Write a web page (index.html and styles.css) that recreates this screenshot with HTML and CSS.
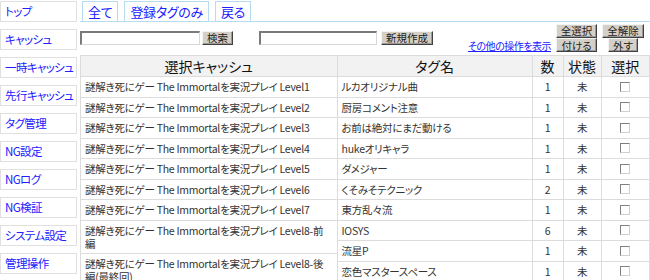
FILE: index.html
```html
<html>
  <head>
    <meta charset="utf-8" />
    <link rel="stylesheet" href="styles.css">
  </head>
  <body>
    <div class="layout">
      <div class="sidenav">
        <a href="#">トップ</a>
        <a href="#">キャッシュ</a>
        <a href="#">一時キャッシュ</a>
        <a href="#">先行キャッシュ</a>
        <a href="#">タグ管理</a>
        <a href="#">NG設定</a>
        <a href="#">NGログ</a>
        <a href="#">NG検証</a>
        <a href="#">システム設定</a>
        <a href="#">管理操作</a>
      </div>

      <div class="main">
        <div class="tabs">
          <a href="#">全て</a>
          <a href="#">登録タグのみ</a>
          <a href="#">戻る</a>
        </div>

        <div class="tools">
          <div class="search">
            <input type="text" class="text" id="searchInput" />
            <button class="btn btn-search">検索</button>
            <input type="text" class="text text-new" id="newTagInput" />
            <button class="btn btn-new">新規作成</button>
          </div>
          <div class="bulk">
            <span></span>
            <button class="btn">全選択</button>
            <button class="btn">全解除</button>
            <a href="#" class="more">その他の操作を表示</a>
            <button class="btn">付ける</button>
            <button class="btn">外す</button>
          </div>
        </div>

        <div class="tables">
          <table class="cache-table">
            <tr><th>選択キャッシュ</th></tr>
            <tr><td>謎解き死にゲー The Immortalを実況プレイ Level1</td></tr>
            <tr><td>謎解き死にゲー The Immortalを実況プレイ Level2</td></tr>
            <tr><td>謎解き死にゲー The Immortalを実況プレイ Level3</td></tr>
            <tr><td>謎解き死にゲー The Immortalを実況プレイ Level4</td></tr>
            <tr><td>謎解き死にゲー The Immortalを実況プレイ Level5</td></tr>
            <tr><td>謎解き死にゲー The Immortalを実況プレイ Level6</td></tr>
            <tr><td>謎解き死にゲー The Immortalを実況プレイ Level7</td></tr>
            <tr><td>謎解き死にゲー The Immortalを実況プレイ Level8-前編</td></tr>
            <tr><td>謎解き死にゲー The Immortalを実況プレイ Level8-後編(最終回)</td></tr>
          </table>

          <table class="tag-table">
            <tr>
              <th class="col-name">タグ名</th>
              <th class="col-num">数</th>
              <th class="col-state">状態</th>
              <th class="col-check">選択</th>
            </tr>
            <tr><td>ルカオリジナル曲</td><td class="c">1</td><td class="c">未</td><td class="c"><input type="checkbox" class="check" /></td></tr>
            <tr><td>厨房コメント注意</td><td class="c">1</td><td class="c">未</td><td class="c"><input type="checkbox" class="check" /></td></tr>
            <tr><td>お前は絶対にまだ動ける</td><td class="c">1</td><td class="c">未</td><td class="c"><input type="checkbox" class="check" /></td></tr>
            <tr><td>hukeオリキャラ</td><td class="c">1</td><td class="c">未</td><td class="c"><input type="checkbox" class="check" /></td></tr>
            <tr><td>ダメジャー</td><td class="c">1</td><td class="c">未</td><td class="c"><input type="checkbox" class="check" /></td></tr>
            <tr><td>くそみそテクニック</td><td class="c">2</td><td class="c">未</td><td class="c"><input type="checkbox" class="check" /></td></tr>
            <tr><td>東方乱々流</td><td class="c">1</td><td class="c">未</td><td class="c"><input type="checkbox" class="check" /></td></tr>
            <tr><td>IOSYS</td><td class="c">6</td><td class="c">未</td><td class="c"><input type="checkbox" class="check" /></td></tr>
            <tr><td>流星P</td><td class="c">1</td><td class="c">未</td><td class="c"><input type="checkbox" class="check" /></td></tr>
            <tr><td>恋色マスタースペース</td><td class="c">1</td><td class="c">未</td><td class="c"><input type="checkbox" class="check" /></td></tr>
          </table>
        </div>
      </div>
    </div>
  </body>
</html>
```

FILE: styles.css
```css
body {
  margin: 0;
  font-family: "Noto Sans CJK JP", "Liberation Sans", sans-serif;
  font-feature-settings: "palt";
  font-size: 12px;
  color: #333;
  background: #fff;
  overflow: hidden;
}

.layout {
  display: flex;
  align-items: flex-start;
}

/* left menu */
.sidenav {
  width: 77px;
  flex-shrink: 0;
  display: flex;
  flex-direction: column;
  gap: 7px;
  padding-top: 1px;
}

.sidenav a {
  display: block;
  box-sizing: border-box;
  height: 21px;
  line-height: 19px;
  padding-left: 4px;
  border: 1px solid #e0e0e0;
  color: #2020ff;
  text-decoration: none;
  font-size: 11.5px;
  letter-spacing: -0.6px;
  white-space: nowrap;
  overflow: hidden;
}

.main {
  margin-left: 3px;
  flex: 1;
  min-width: 0;
}

/* tabs */
.tabs {
  display: flex;
  gap: 6px;
  padding: 1px 0 0 2px;
  border-bottom: 1px solid #b6dcf2;
}

.tabs a {
  box-sizing: border-box;
  height: 20px;
  line-height: 19px;
  padding: 0 5px;
  border: 1px solid #b6dcf2;
  border-bottom: 0;
  color: #2020ff;
  font-size: 13px;
  letter-spacing: -0.3px;
  text-decoration: none;
}

/* search + bulk buttons */
.tools {
  display: flex;
  justify-content: space-between;
  align-items: center;
  height: 29px;
  margin: 1px 0 3px;
}

.search {
  display: flex;
  align-items: center;
}

input.text {
  box-sizing: border-box;
  width: 120px;
  height: 14px;
  margin: 0;
  padding: 0 2px;
  border-style: solid;
  border-width: 2px 1px 1px 2px;
  border-color: #7a7a7a #d8d8d8 #d8d8d8 #7a7a7a;
  background: #fff;
}

.text-new {
  width: 118px !important;
  margin-left: 26px !important;
}

.btn {
  box-sizing: border-box;
  height: 14px;
  margin: 0;
  padding: 0 4px;
  font-family: inherit;
  font-feature-settings: "palt";
  font-size: 10.5px;
  line-height: 11px;
  color: #222;
  background: #d4d0c8;
  border: 1px solid;
  border-color: #f4f4f4 #404040 #404040 #f4f4f4;
  box-shadow: inset -1px -1px 0 #9a9a9a;
  outline: 0;
}

.btn-search {
  margin-left: 2px;
}

.btn-new {
  margin-left: 4px;
}

.bulk {
  display: grid;
  grid-template-columns: auto 47px 46px;
  grid-template-rows: 15px 14px;
  align-items: center;
  justify-items: center;
  margin-right: 4px;
}

.bulk .more {
  justify-self: end;
  margin-right: 2px;
  font-size: 10px;
  letter-spacing: -0.5px;
  color: #2020ff;
}

/* tables */
.tables {
  display: flex;
  align-items: flex-start;
}

table {
  border-collapse: collapse;
}

th,
td {
  border: 1px solid #dcdcdc;
}

th {
  background: #f2f2f2;
  font-weight: normal;
  font-size: 14px;
  line-height: 14px;
  padding: 3px 4px;
  color: #111;
}

td {
  font-size: 10.5px;
  letter-spacing: -0.25px;
  line-height: 13px;
  padding: 3.25px 4px;
  text-align: left;
}

.cache-table {
  width: 258px;
}

.tag-table {
  margin-left: -1px;
  width: 314px;
}

.col-name {
  width: 186px;
}

.col-num {
  width: 22px;
}

.col-state {
  width: 29px;
}

.c {
  text-align: center;
}

.check {
  appearance: none;
  box-sizing: border-box;
  width: 10px;
  height: 10px;
  margin: 0;
  vertical-align: middle;
  border: 1px solid;
  border-color: #808080 #d0d0d0 #d0d0d0 #808080;
  background: #fff;
}
```
